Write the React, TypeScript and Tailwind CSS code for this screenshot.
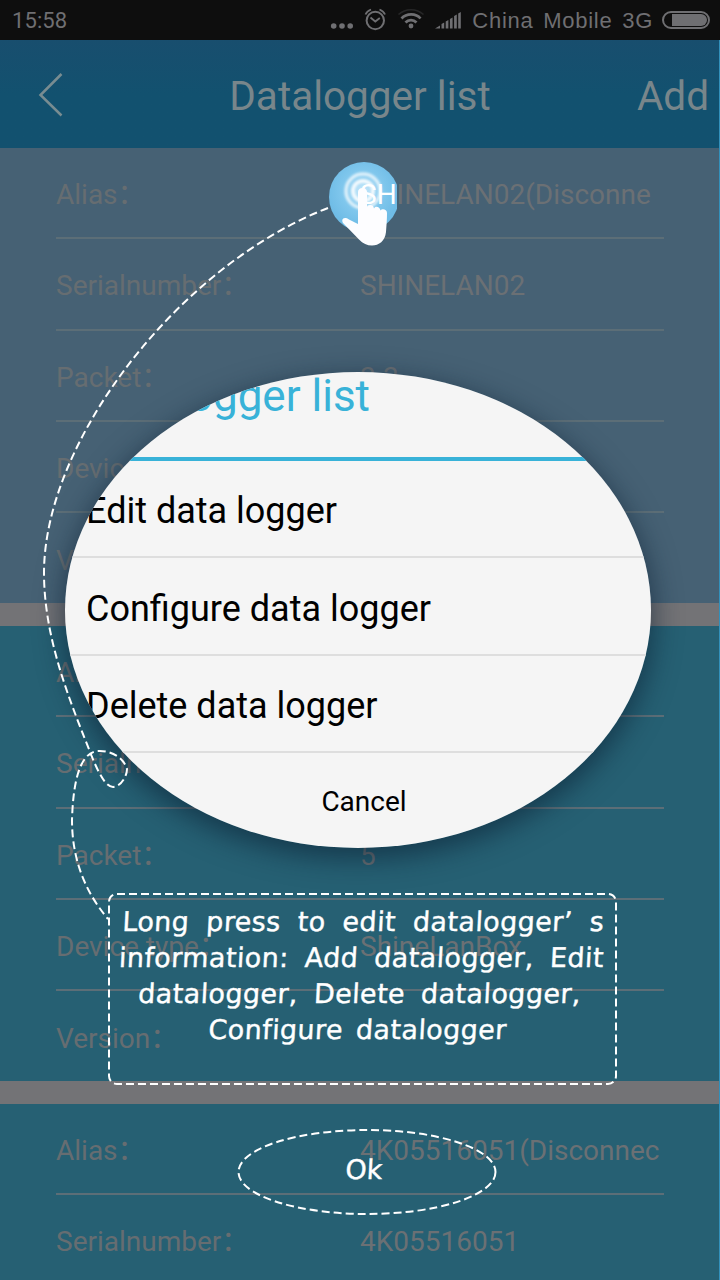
import React from "react";

type Row = { label: string; value?: string; accent?: string };

const cards: { bg: string; rows: Row[] }[] = [
  {
    bg: "bg-[#466174]",
    rows: [
      { label: "Alias", accent: "SH", value: "INELAN02(Disconne" },
      { label: "Serialnumber", value: "SHINELAN02" },
      { label: "Packet", value: "3.3" },
      { label: "Device type" },
      { label: "Version" },
    ],
  },
  {
    bg: "bg-[#266073]",
    rows: [
      { label: "Alias" },
      { label: "Serialnumber" },
      { label: "Packet", value: "5" },
      { label: "Device type", value: "ShineLanBox" },
      { label: "Version" },
    ],
  },
  {
    bg: "bg-[#266073]",
    rows: [
      { label: "Alias", value: "4K05516051(Disconnec" },
      { label: "Serialnumber", value: "4K05516051" },
    ],
  },
];

function StatusBar() {
  return (
    <div className="flex h-10 shrink-0 items-center bg-[#0e0e0e] pl-3 pr-[10px] text-[#6f6f72]">
      <span className="text-[22px] tracking-[0.1px]">15:58</span>
      <svg className="ml-auto" width="136" height="40" viewBox="328 0 136 40" fill="none" stroke="#6f6f72">
        <g fill="#6f6f72" stroke="none">
          <circle cx="333.7" cy="26" r="2.8" />
          <circle cx="342" cy="26" r="2.8" />
          <circle cx="350.2" cy="26" r="2.8" />
          <circle cx="411" cy="26" r="2.4" />
          <path d="M435 28.500l5-3v3zM441.500 24l2.700-1.500v6h-2.700zM445.700 21.500l2.700-1.500v8.500h-2.700zM449.900 19l2.700-1.500v11h-2.700zM454.100 16l2.700-1.500v14h-2.700zM458.200 13.500l2.600-1.500v16.500h-2.600z" />
        </g>
        <circle cx="375.300" cy="20.500" r="8.700" strokeWidth="2" />
        <path d="M370.500 17.500l4.800 4 4.500-3.500M365.500 14.500c1-2.500 3-4 5.500-5M385 14.500c-1-2.500-3-4-5.500-5" strokeWidth="1.800" />
        <path d="M405.500 22.500c3-3.300 8-3.300 11 0M401.500 18.500c5-5.500 14.500-5.500 19 0" strokeWidth="2.700" />
        <path d="M398.500 14.500c7-6.500 18-6.500 25 0" strokeWidth="1.500" opacity=".25" />
      </svg>
      <span className="ml-2 whitespace-pre font-['Liberation_Sans',sans-serif] text-[22px] tracking-[0.75px] [word-spacing:2.8px]">China Mobile 3G</span>
      <div className="ml-[9px] h-[18px] w-12 rounded-full border-2 border-[#6f6f72] py-[1px] pl-2 pr-[1px]">
        <div className="h-full rounded-r-full bg-[#6f6f72]" />
      </div>
    </div>
  );
}

function TouchGlow() {
  return (
    <svg className="absolute left-[329px] top-[14px]" width="68" height="72" viewBox="329 162 68 72">
      <defs>
        <radialGradient id="touch" gradientUnits="userSpaceOnUse" cx="363" cy="191" r="36">
          <stop offset="0" stopColor="#c9e9fb" />
          <stop offset=".5" stopColor="#83c9ee" />
          <stop offset="1" stopColor="#6fbce6" />
        </radialGradient>
        <filter id="soft" x="-20%" y="-20%" width="140%" height="140%">
          <feGaussianBlur stdDeviation="1.1" />
        </filter>
      </defs>
      <circle cx="364" cy="197" r="35" fill="url(#touch)" />
      <g fill="none" stroke="#fff" filter="url(#soft)">
        <circle cx="363" cy="191" r="17" strokeWidth="3.500" opacity=".7" />
        <circle cx="363" cy="191" r="10" strokeWidth="4" opacity=".85" />
      </g>
    </svg>
  );
}

function Card({ bg, rows }: { bg: string; rows: Row[] }) {
  return (
    <section className={`shrink-0 ${bg}`}>
      {rows.map((r, i) => (
        <div key={r.label} className={`relative px-14 ${i < 4 ? "h-[91.25px]" : "h-[90px]"}`}>
          {r.accent && <TouchGlow />}
          <div className={`relative flex h-full items-center pt-[5px] ${i < 4 ? "border-b-2 border-[#5c6e77]" : ""}`}>
            <div className="w-[304px] text-[28px] text-[#666d71]">{r.label}：</div>
            <div className="whitespace-nowrap text-[28px] text-[#6b7074]">
              {r.accent && <span className="text-white">{r.accent}</span>}
              {r.value}
            </div>
          </div>
        </div>
      ))}
    </section>
  );
}

function MenuLens() {
  return (
    <div className="absolute left-[65px] top-[372px] h-[476px] w-[586px] overflow-hidden rounded-[50%] bg-[#f5f5f5] text-black">
      <div className="h-[89px] border-b-4 border-[#38b2d8] pl-[21px] text-[44px] leading-[48px] text-[#38b2d8]">Datalogger list</div>
      <div className="flex h-[97px] items-center border-b-2 border-[#dedede] pl-[21px] pt-[5px] text-[36px]">Edit data logger</div>
      <div className="flex h-[97.500px] items-center border-b-2 border-[#dedede] pl-[21px] pt-[6px] text-[36px]">Configure data logger</div>
      <div className="flex h-[97.500px] items-center border-b-2 border-[#dedede] pl-[21px] pt-[5px] text-[36px]">Delete data logger</div>
      <div className="flex h-[97px] items-center justify-center pl-3 pt-[1px] text-[28px]">Cancel</div>
    </div>
  );
}

function Guide() {
  return (
    <svg className="absolute left-0 top-0" width="720" height="1280" fill="none" stroke="#fff" strokeWidth="2" strokeDasharray="8 4">
      <path d="M328 208C180 265 44 440 44 573C44 642 73 708 92 757C99 774 106 787 113 787C120 787 127 777 127 769C123 756 109 750 97 751C78 754 73 787 72 820C72 862 87 894 108 919" />
      <rect x="109" y="894" width="507" height="190" rx="8" />
      <ellipse cx="367" cy="1172" rx="128.500" ry="42" />
      <path
        stroke="none"
        fill="#fdfdff"
        d="M358 192c0-5.500 9-5.500 9 0v15c1-3 6.500-3 7 1.500 1-3 6-2 6.500 2 1-2 6.500-2 6.500 2.500 0 7-.5 12-1 19-1 9-7 13.500-14 13.500-5 0-9-2-13-6L344 224c-4-4-.5-8.500 5-4.500l9 4.500z"
      />
    </svg>
  );
}

export default function App() {
  return (
    <main className="relative flex h-[1280px] w-[720px] flex-col overflow-hidden bg-[#737376] font-['Roboto','Noto_Sans_CJK_SC',sans-serif]">
      <StatusBar />
      <header className="grid h-[108px] shrink-0 grid-cols-[1fr_auto_1fr] items-center bg-linear-to-b from-[#184e6e] to-[#12516f] to-50% px-[11px] pt-[5px] text-[40.500px] text-[#78868b]">
        <svg width="26" height="46" viewBox="0 0 26 46" className="-mt-1.5 ml-[27px]" fill="none" stroke="#788c91" strokeWidth="2.500">
          <path d="M23.500 3L2.500 24l21 20.500" />
        </svg>
        <h1>Datalogger list</h1>
        <span className="text-right">Add</span>
      </header>
      <div className="flex shrink-0 flex-col gap-[23px]">
        {cards.map((c, i) => (
          <Card key={i} bg={c.bg} rows={c.rows} />
        ))}
      </div>
      <div className="absolute left-[65px] top-[372px] h-[476px] w-[586px] rounded-[50%] shadow-[0_8px_28px_2px_rgba(10,30,50,0.6)]" />
      <MenuLens />
      <Guide />
      <p className="absolute left-[109px] top-[904px] w-[507px] -skew-x-3 whitespace-nowrap pr-1 text-center font-['DejaVu_Sans',sans-serif] text-[27px] leading-[36px] text-white [-webkit-text-stroke:0.4px_white]">
        <span className="block tracking-[0.400px] [word-spacing:8px]">Long press to edit datalogger’ s</span>
        <span className="block tracking-[0.400px] [word-spacing:7px]">information: Add datalogger, Edit</span>
        <span className="block tracking-[0.400px] [word-spacing:7px]">datalogger, Delete datalogger,</span>
        <span className="block tracking-[0.400px] [word-spacing:4px]">Configure datalogger</span>
      </p>
      <button className="absolute left-[239px] top-[1130px] h-[80px] w-[250px] -skew-x-3 font-['DejaVu_Sans',sans-serif] text-[27px] text-white [-webkit-text-stroke:0.4px_white]">Ok</button>
      <div className="absolute right-0 top-10 h-[1240px] w-px bg-[#3290bb]" />
    </main>
  );
}
